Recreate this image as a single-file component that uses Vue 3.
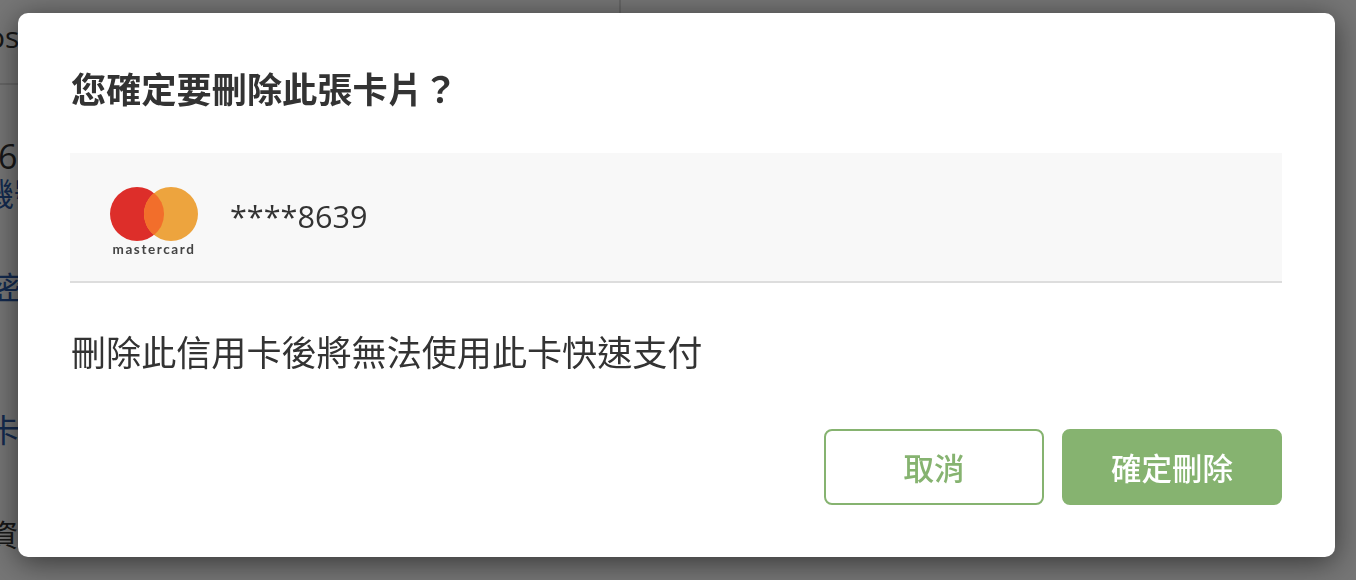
<script setup>
const pageRows = [
  { text: 'os', cls: 'row-os' },
  { text: '60', cls: 'row-num' },
  { text: '機號', cls: 'row-link row-phone' },
  { text: '密碼', cls: 'row-link row-pass' },
  { text: '卡片', cls: 'row-link row-card' },
  { text: '資訊', cls: 'row-info' },
]
</script>

<template>
  <div class="page">
    <div class="page-col">
      <div v-for="row in pageRows" :key="row.cls" :class="row.cls">{{ row.text }}</div>
    </div>
  </div>

  <div class="backdrop">
    <div class="modal" role="dialog">
      <h2 class="title">您確定要刪除此張卡片？</h2>

      <div class="card-row">
        <div class="brand">
          <svg class="brand-mark" viewBox="0 0 88 54" aria-hidden="true">
            <circle cx="27" cy="27" r="27" fill="#dd2e2a" />
            <circle cx="61" cy="27" r="27" fill="#eda43e" />
            <path d="M44 6a27 27 0 0 1 0 42a27 27 0 0 1 0-42z" fill="#f26e2b" />
          </svg>
          <span class="brand-name">mastercard</span>
        </div>
        <span class="card-no">****8639</span>
      </div>

      <p class="note">刪除此信用卡後將無法使用此卡快速支付</p>

      <div class="actions">
        <button type="button" class="btn btn-outline">取消</button>
        <button type="button" class="btn btn-solid">確定刪除</button>
      </div>
    </div>
  </div>
</template>

<style>
html, body { margin: 0; height: 100%; background: #fff; overflow: hidden; }
</style>

<style scoped>
.page {
  height: 580px;
  overflow: hidden;
  font-family: "Open Sans", "Noto Sans CJK TC", sans-serif;
  color: #333;
}
.page-col { white-space: nowrap; }
.row-os {
  width: 634px;
  height: 85px;
  box-sizing: border-box;
  padding-top: 15px;
  margin-left: -13px;
  font-size: 30px;
  line-height: 44px;
  border-bottom: 2px solid #ddd;
  border-right: 2px solid #ddd;
}
.row-num { margin: 49px 0 0 -2px; font-size: 34px; line-height: 44px; }
.row-link { color: #2a5bab; font-size: 32px; line-height: 44px; }
.row-phone { margin: -6px 0 0 -18px; }
.row-pass { margin: 50px 0 0 -6px; }
.row-card { margin: 98px 0 0 -12px; }
.row-info { margin: 61px 0 0 -12px; font-size: 30px; line-height: 44px; }

.backdrop {
  position: fixed;
  inset: 0;
  background: rgba(0, 0, 0, 0.54);
  padding: 13px 21px 0 18px;
  box-sizing: border-box;
}
.modal {
  height: 544px;
  box-sizing: border-box;
  padding: 50px 53px 0 52px;
  background: #fff;
  border-radius: 10px;
  box-shadow: 0 5px 30px rgba(0, 0, 0, 0.55);
  font-family: "Noto Sans CJK TC", sans-serif;
  color: #333;
}
.title {
  margin: 0 0 0 1px;
  font-size: 35.2px;
  line-height: 50px;
  font-weight: 700;
}
.card-row {
  margin-top: 40px;
  height: 130px;
  box-sizing: border-box;
  display: flex;
  align-items: center;
  gap: 32px;
  padding-left: 40px;
  background: #f8f8f8;
  border-bottom: 2px solid #ddd;
}
.brand {
  width: 88px;
  display: flex;
  flex-direction: column;
  align-items: center;
  margin-top: 10px;
}
.brand-mark { width: 88px; height: 54px; display: block; }
.brand-name {
  font-family: Lato, sans-serif;
  font-size: 13.5px;
  font-weight: 700;
  line-height: 16px;
  letter-spacing: 1.6px;
  color: #444;
}
.card-no {
  margin-top: -2px;
  font-family: "Open Sans", sans-serif;
  font-size: 30.6px;
  line-height: 40px;
}
.note {
  margin: 43px 0 0 1px;
  font-size: 35.1px;
  line-height: 50px;
}
.actions {
  margin-top: 53px;
  display: flex;
  justify-content: flex-end;
  gap: 18px;
}
.btn {
  width: 220px;
  height: 76px;
  border-radius: 8px;
  border: 2px solid #86b370;
  font-family: "Noto Sans CJK TC", sans-serif;
  font-size: 30.5px;
  font-weight: 500;
  cursor: pointer;
}
.btn-outline { background: #fff; color: #86b370; }
.btn-solid { background: #86b370; color: #fff; }
</style>
